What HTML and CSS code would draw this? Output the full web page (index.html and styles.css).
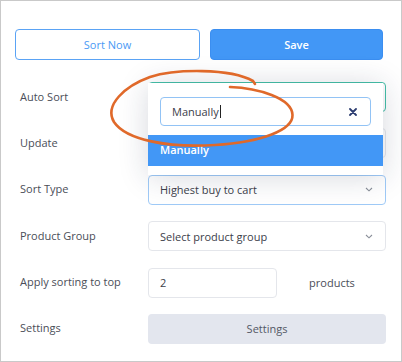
FILE: index.html
```html
<!DOCTYPE html>
<html>
<head>
<meta charset="utf-8">
<link rel="stylesheet" href="styles.css">
</head>
<body>
<div class="frame">
  <div class="actions">
    <button class="btn btn-outline">Sort Now</button>
    <button class="btn btn-primary">Save</button>
  </div>
  <div class="form">
    <div class="label">Auto Sort</div>
    <div class="field-wrap">
      <div class="field field-focus"></div>
      <div class="dropdown">
        <div class="search">
          <span class="search-text">Manually</span><span class="caret"></span>
          <svg class="clear" width="8" height="8" viewBox="0 0 8 8"><path d="M1 1 L7 7 M7 1 L1 7" stroke="#2b3c70" stroke-width="1.8" stroke-linecap="round"/></svg>
        </div>
        <div class="option">Manually</div>
      </div>
    </div>

    <div class="label">Update</div>
    <div class="field"></div>

    <div class="label">Sort Type</div>
    <div class="field field-select field-hover">
      <span>Highest buy to cart</span>
      <svg class="chev" width="8" height="5" viewBox="0 0 8 5"><path d="M1 1 L4 3.8 L7 1" fill="none" stroke="#8a8f99" stroke-width="1.1"/></svg>
    </div>

    <div class="label">Product Group</div>
    <div class="field field-select">
      <span>Select product group</span>
      <svg class="chev" width="8" height="5" viewBox="0 0 8 5"><path d="M1 1 L4 3.8 L7 1" fill="none" stroke="#8a8f99" stroke-width="1.1"/></svg>
    </div>

    <div class="label">Apply sorting to top</div>
    <div class="apply">
      <div class="field field-small"><span>2</span></div>
      <span class="unit">products</span>
    </div>

    <div class="label">Settings</div>
    <button class="btn btn-settings">Settings</button>
  </div>

  <svg class="annot" width="402" height="362" viewBox="0 0 402 362">
    <path d="M230,87 C258,88 292,98 292.5,115 C293,130 262,142 215,145 C168,148 126,140 114,122 C104,105 125,86 150,77 C175,69 230,68 253,81 L255,84" fill="none" stroke="#e0692a" stroke-width="2.6" stroke-linecap="round"/>
  </svg>
</div>
</body>
</html>
```

FILE: styles.css
```css
* { box-sizing: border-box; }
html, body { margin: 0; padding: 0; background: #fff; }
body { font-family: "Open Sans", "Noto Sans", sans-serif; font-size: 11px; color: #4a4e58; }

.frame {
  position: relative;
  width: 402px;
  height: 362px;
  border: 1px solid #c9c9c9;
  padding: 28px 18px 0 14px;
  background: #fff;
  overflow: hidden;
}

.actions {
  display: flex;
  gap: 10px;
}

.btn {
  font-family: inherit;
  font-size: 11px;
  border-radius: 4px;
  height: 31px;
  cursor: pointer;
}
.btn-outline {
  width: 185px;
  background: #fff;
  border: 1px solid #5aa3f5;
  color: #4a9af5;
}
.btn-primary {
  flex: 1;
  background: #4297f6;
  border: 1px solid #3b8ef0;
  color: #fff;
  font-weight: 600;
}

.form {
  margin-top: 22px;
  display: grid;
  grid-template-columns: 133px 1fr;
  grid-auto-rows: 30px;
  row-gap: 16.4px;
}

.label {
  display: flex;
  align-items: center;
  padding-left: 5px;
  color: #4a4e58;
  margin-top: -2px;
}

.field {
  height: 30px;
  border: 1px solid #e4e6eb;
  border-radius: 4px;
  background: #fff;
  display: flex;
  align-items: center;
  padding: 0 11px;
  color: #3c404a;
}
.field-select { justify-content: space-between; }
.field-hover { border-color: #9fcaf7; }
.chev { margin-right: 1px; }

.field-wrap { position: relative; }
.field-focus {
  width: 238px;
  border-color: #45c0a8;
}

.dropdown {
  position: absolute;
  left: 0;
  top: 1px;
  width: 235px;
  background: #fff;
  padding: 14px 12px 9px;
  box-shadow: 0 2px 30px rgba(30, 40, 70, 0.18);
  z-index: 2;
}
.search {
  height: 29px;
  border: 1px solid #92c3f5;
  border-radius: 4px;
  display: flex;
  align-items: center;
  padding: 0 13px 0 11px;
  color: #3c404a;
}
.caret {
  display: inline-block;
  width: 1px;
  height: 13px;
  background: #222;
  margin-left: 1px;
}
.clear { margin-left: auto; }
.option {
  margin: 9px -12px 0;
  height: 31px;
  background: #4297f6;
  color: #fff;
  font-weight: 600;
  display: flex;
  align-items: center;
  padding-left: 12px;
  padding-bottom: 2px;
}

.apply {
  display: flex;
  align-items: center;
}
.field-small { width: 129px; }
.unit {
  flex: 1;
  text-align: center;
  color: #4a4e58;
  padding-left: 1px;
}

.btn-settings {
  width: 100%;
  height: 30px;
  background: #e3e6ee;
  border: none;
  color: #535865;
}

.annot {
  position: absolute;
  left: -1px;
  top: -1px;
  pointer-events: none;
  z-index: 5;
}
```
